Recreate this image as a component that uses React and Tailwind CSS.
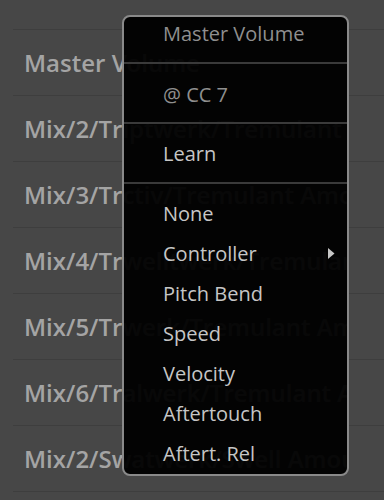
import React from "react";

const rows = [
  "Master Volume",
  "Mix/2/Triptwerk/Tremulant Amount",
  "Mix/3/Trctiv/Tremulant Amount",
  "Mix/4/Trwelltwerk/Tremulant Amount",
  "Mix/5/Trwerk/Tremulant Amount",
  "Mix/6/Tralwerk/Tremulant Amount",
  "Mix/2/Swatwerk/Swell Amount",
];

const items = ["None", "Controller", "Pitch Bend", "Speed", "Velocity", "Aftertouch", "Aftert. Rel"];

export default function App() {
  return (
    <div
      className="relative w-[384px] h-[500px] overflow-hidden bg-[#474747]"
      style={{ fontFamily: '"Open Sans", "Noto Sans", sans-serif' }}
    >
      <div className="ml-[13px]">
        <div className="h-[30px] border-b border-[#3e3e3e]" />
        {rows.map((r) => (
          <div key={r} className="h-[66px] border-b border-[#3e3e3e] flex items-center pl-[11px]">
            <div className="w-[325px] overflow-hidden whitespace-nowrap text-[24px] leading-[30px] font-semibold text-[#a4a4a4]">
              {r}
            </div>
          </div>
        ))}
      </div>

      <div className="absolute left-[122px] top-[15px] w-[227px] rounded-lg border-2 border-[#8a8a8a] bg-black/95 overflow-hidden">
        <div className="h-[34px] flex items-center pl-[39px] text-[20px] leading-[26px] text-[#8f8f8f]">Master Volume</div>
        <div className="h-[11px]" />
        <div className="h-[2px] bg-[#3a3a3a]" />
        <div className="h-[58px] pt-[4px] flex items-center pl-[39px] text-[20px] leading-[26px] text-[#8f8f8f]">@ CC 7</div>
        <div className="h-[2px] bg-[#3a3a3a]" />
        <div className="h-[58px] pt-[2px] flex items-center pl-[39px] text-[20px] leading-[26px] text-[#c6c6c6]">Learn</div>
        <div className="h-[2px] bg-[#3a3a3a]" />
        <div className="pt-[10px]">
          {items.map((it) => (
            <div key={it} className="h-[40px] flex items-center justify-between pl-[39px] pr-[12px] text-[20px] leading-[26px] text-[#c6c6c6]">
              <span>{it}</span>
              {it === "Controller" && (
                <svg width="7" height="11" viewBox="0 0 7 11" className="mt-[-2px]">
                  <path d="M0 0 L6.5 5.5 L0 11 Z" fill="#c6c6c6" />
                </svg>
              )}
            </div>
          ))}
        </div>
      </div>
    </div>
  );
}
